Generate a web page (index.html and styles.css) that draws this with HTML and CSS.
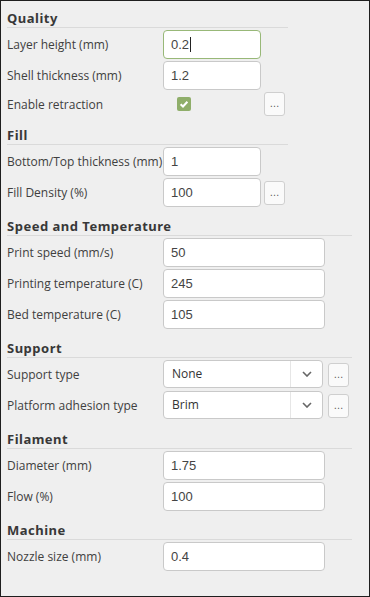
FILE: index.html
```html
<!DOCTYPE html>
<html>
<head>
  <meta charset="utf-8">
  <title>Print settings</title>
  <link rel="stylesheet" href="styles.css">
</head>
<body>
  <div class="panel">

    <!-- Quality -->
    <div class="section narrow">
      <div class="section-title">Quality</div>
      <div class="rows">
        <label class="label">Layer height (mm)</label>
        <div class="field focused">0.2<span class="caret"></span></div>
        <span></span>

        <label class="label">Shell thickness (mm)</label>
        <input class="field" type="text" value="1.2">
        <span></span>

        <label class="label">Enable retraction</label>
        <div class="check-cell">
          <span class="checkbox">
            <svg width="10" height="10" viewBox="0 0 10 10"><path d="M1.6 5.2 L4 7.5 L8.4 2.8" fill="none" stroke="#fff" stroke-width="2"/></svg>
          </span>
        </div>
        <button class="more">&hellip;</button>
      </div>
    </div>

    <!-- Fill -->
    <div class="section narrow">
      <div class="section-title">Fill</div>
      <div class="rows">
        <label class="label">Bottom/Top thickness (mm)</label>
        <input class="field" type="text" value="1">
        <span></span>

        <label class="label">Fill Density (%)</label>
        <input class="field" type="text" value="100">
        <button class="more">&hellip;</button>
      </div>
    </div>

    <!-- Speed and Temperature -->
    <div class="section wide">
      <div class="section-title">Speed and Temperature</div>
      <div class="rows">
        <label class="label">Print speed (mm/s)</label>
        <input class="field" type="text" value="50">
        <span></span>

        <label class="label">Printing temperature (C)</label>
        <input class="field" type="text" value="245">
        <span></span>

        <label class="label">Bed temperature (C)</label>
        <input class="field" type="text" value="105">
        <span></span>
      </div>
    </div>

    <!-- Support -->
    <div class="section wide">
      <div class="section-title">Support</div>
      <div class="rows">
        <label class="label">Support type</label>
        <div class="select">
          <span class="select-value">None</span>
          <span class="select-arrow">
            <svg width="10" height="6" viewBox="0 0 10 6"><path d="M1 1 L5 5 L9 1" fill="none" stroke="#666" stroke-width="1.6"/></svg>
          </span>
        </div>
        <button class="more">&hellip;</button>

        <label class="label">Platform adhesion type</label>
        <div class="select">
          <span class="select-value">Brim</span>
          <span class="select-arrow">
            <svg width="10" height="6" viewBox="0 0 10 6"><path d="M1 1 L5 5 L9 1" fill="none" stroke="#666" stroke-width="1.6"/></svg>
          </span>
        </div>
        <button class="more">&hellip;</button>
      </div>
    </div>

    <!-- Filament -->
    <div class="section wide">
      <div class="section-title">Filament</div>
      <div class="rows">
        <label class="label">Diameter (mm)</label>
        <input class="field" type="text" value="1.75">
        <span></span>

        <label class="label">Flow (%)</label>
        <input class="field" type="text" value="100">
        <span></span>
      </div>
    </div>

    <!-- Machine -->
    <div class="section wide">
      <div class="section-title">Machine</div>
      <div class="rows">
        <label class="label">Nozzle size (mm)</label>
        <input class="field" type="text" value="0.4">
        <span></span>
      </div>
    </div>

  </div>
</body>
</html>
```

FILE: styles.css
```css
:root {
  --bg: #efefef;
  --text: #404040;
  --line: #dadada;
  --border: #c9c9c9;
  --focus: #98b878;
  --check: #8fae6a;
}

* {
  box-sizing: border-box;
  margin: 0;
  padding: 0;
}

html, body {
  width: 100%;
  height: 100%;
  overflow: hidden;
  background-color: var(--bg);
  font-family: 'Open Sans', 'Noto Sans', sans-serif;
  color: var(--text);
}

.panel {
  height: 597px;
  border: 1px solid #1e1e1e;
  padding: 0 6px;
}

/* Sections */
.section.narrow { width: 281px; }
.section.wide { width: 345px; }

.section-title {
  font-family: 'Noto Sans', 'Open Sans', sans-serif;
  font-size: 13px;
  font-weight: 700;
  letter-spacing: 0.5px;
  line-height: 18px;
  padding-top: 10px;
  border-bottom: 1px solid var(--line);
  color: #383838;
}

.section:first-child .section-title {
  padding-top: 8px;
}

.rows {
  display: grid;
  grid-template-columns: 156px 1fr 27px;
  row-gap: 2px;
  padding-top: 2px;
  align-items: center;
}

.label {
  font-size: 12px;
  color: var(--text);
  white-space: nowrap;
}

/* Inputs */
.field {
  height: 29px;
  width: 100%;
  border: 1px solid var(--border);
  border-radius: 4px;
  background: #fff;
  padding: 0 7px;
  font-family: 'Liberation Sans', Arial, sans-serif;
  font-size: 13px;
  color: #444;
  outline: none;
}

div.field {
  display: flex;
  align-items: center;
}

.field.focused {
  border-color: var(--focus);
}

.caret {
  width: 1px;
  height: 15px;
  margin-left: 1px;
  background-color: #222;
}

.check-cell {
  height: 24px;
  display: flex;
  align-items: center;
  padding-left: 14px;
}

.checkbox {
  width: 14px;
  height: 14px;
  border-radius: 2px;
  background-color: var(--check);
  display: flex;
  align-items: center;
  justify-content: center;
}

.more {
  justify-self: center;
  width: 21px;
  height: 24px;
  border: 1px solid #cfcfcf;
  border-radius: 3px;
  background: #fafafa;
  color: #555;
  font-family: 'Liberation Sans', Arial, sans-serif;
  font-size: 10px;
  line-height: 20px;
  text-align: center;
}

/* Select */
.select {
  width: 160px;
  height: 28px;
  margin-bottom: 1px;
  display: flex;
  border: 1px solid var(--border);
  border-radius: 4px;
  background: #fff;
  font-size: 12px;
  color: #333;
}

.select-value {
  flex: 1;
  padding-left: 8px;
  line-height: 26px;
}

.select-arrow {
  width: 32px;
  border-left: 1px solid #e6e6e6;
  display: flex;
  align-items: center;
  justify-content: center;
}
```
